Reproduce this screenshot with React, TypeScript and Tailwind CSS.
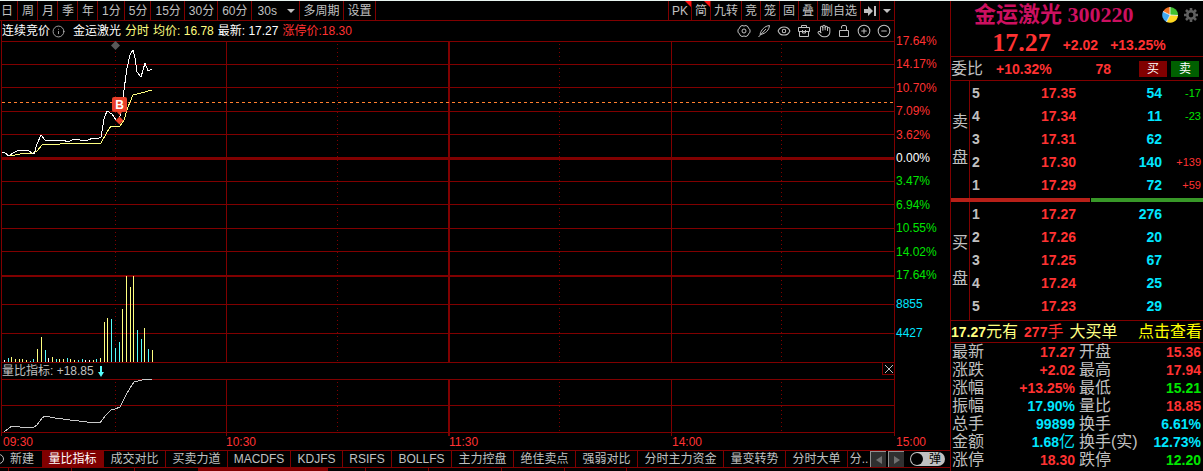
import { useState } from 'react';
import type { ReactNode } from 'react';
import { CircleMinus, CirclePlus, Eye, Hand, Info } from 'lucide-react';

const RED = 'text-[#ff3232]';
const GREEN = 'text-[#00e600]';
const CYAN = 'text-[#00e6ff]';

const periods = ['周', '月', '季', '年', '1分', '5分', '15分', '30分', '60分'];

const tools = [
  { label: 'PK', hot: true },
  { label: '简', hot: true },
  { label: '九转' },
  { label: '竞' },
  { label: '笼' },
  { label: '固' },
  { label: '叠' },
  { label: '删自选' },
];

const percents = [
  { text: '17.64%', color: RED },
  { text: '14.17%', color: RED },
  { text: '10.70%', color: RED },
  { text: '7.09%', color: RED },
  { text: '3.62%', color: RED },
  { text: '0.00%', color: 'text-white' },
  { text: '3.47%', color: GREEN },
  { text: '6.94%', color: GREEN },
  { text: '10.55%', color: GREEN },
  { text: '14.02%', color: GREEN },
  { text: '17.64%', color: GREEN },
];

const indicators = [
  { label: '量比指标', width: 'w-[62px]' },
  { label: '成交对比', width: 'w-[62px]' },
  { label: '买卖力道', width: 'w-[62px]' },
  { label: 'MACDFS', width: 'w-[63px]' },
  { label: 'KDJFS', width: 'w-[52px]' },
  { label: 'RSIFS', width: 'w-[49px]' },
  { label: 'BOLLFS', width: 'w-[60px]' },
  { label: '主力控盘', width: 'w-[62px]' },
  { label: '绝佳卖点', width: 'w-[62px]' },
  { label: '强弱对比', width: 'w-[62px]' },
  { label: '分时主力资金', width: 'w-[86px]' },
  { label: '量变转势', width: 'w-[62px]' },
  { label: '分时大单', width: 'w-[62px]' },
];

const asks = [
  { level: 5, price: '17.35', qty: '54', change: '-17' },
  { level: 4, price: '17.34', qty: '11', change: '-23' },
  { level: 3, price: '17.31', qty: '62', change: '' },
  { level: 2, price: '17.30', qty: '140', change: '+139' },
  { level: 1, price: '17.29', qty: '72', change: '+59' },
];

const bids = [
  { level: 1, price: '17.27', qty: '276', change: '' },
  { level: 2, price: '17.26', qty: '20', change: '' },
  { level: 3, price: '17.25', qty: '67', change: '' },
  { level: 4, price: '17.24', qty: '25', change: '' },
  { level: 5, price: '17.23', qty: '29', change: '' },
];

const stats = [
  { left: '最新', value: '17.27', color: RED, right: '开盘', value2: '15.36', color2: RED },
  { left: '涨跌', value: '+2.02', color: RED, right: '最高', value2: '17.94', color2: RED },
  { left: '涨幅', value: '+13.25%', color: RED, right: '最低', value2: '15.21', color2: GREEN },
  { left: '振幅', value: '17.90%', color: CYAN, right: '量比', value2: '18.85', color2: RED },
  { left: '总手', value: '99899', color: CYAN, right: '换手', value2: '6.61%', color2: CYAN },
  { left: '金额', value: '1.68', unit: '亿', color: CYAN, right: '换手(实)', value2: '12.73%', color2: CYAN },
  { left: '涨停', value: '18.30', color: RED, right: '跌停', value2: '12.20', color2: GREEN },
];

const Y = '#ffff80';
const C = '#54fcfc';
const W = '#ffffff';

// x, height, color
const volume: [number, number, string][] = [
  [4, 2, W], [8, 4, C], [11, 5, Y], [15, 3, Y], [19, 3, Y], [22, 3, Y], [26, 2, Y],
  [30, 1, C], [33, 3, C], [37, 13, Y], [41, 25, Y], [45, 12, C], [48, 4, W], [52, 5, Y],
  [56, 3, C], [59, 3, Y], [63, 3, Y], [67, 4, C], [70, 3, Y], [74, 2, Y], [78, 2, C],
  [82, 3, C], [85, 2, W], [89, 2, W], [93, 2, Y], [96, 3, C], [100, 4, Y], [104, 40, Y],
  [107, 44, Y], [111, 43, C], [115, 14, C], [119, 20, C], [122, 53, Y], [126, 86, Y],
  [130, 75, Y], [133, 86, Y], [137, 32, C], [141, 23, C], [144, 34, Y], [148, 13, C],
  [152, 12, Y],
];

const priceLine =
  '2,111 5,112 9,115 13,112 17,110 22,109 28,109 32,112 34,113 37,103 41,94 45,99 63,99 68,101 74,98 80,99 88,99 93,97 97,98 101,96 104,78 107,70 112,73 116,79 119,80 122,66 124,49 127,27 130,14 133,9 135,17 137,31 141,36 145,22 148,30 152,28';
const averageLine =
  '2,111 5,112 10,115 20,113 33,112 37,110 43,103 60,103 63,102 101,102 107,91 111,85 120,85 124,79 128,66 133,54 141,52 152,49';
const ratioLine =
  '4,53 12,47 20,48 33,49 37,46 42,39 45,37 55,39 70,41 87,43 100,44 105,37 111,31 115,30 120,28 125,18 130,9 134,3 142,1 152,0';

function Verticals({ height, dots }: { height: number; dots: number }) {
  return (
    <>
      <g fill="#800000">
        <rect x="1" width="1" height={height} />
        <rect x="226" width="1" height={height} />
        <rect x="448" width="2" height={height} />
        <rect x="671" width="1" height={height} />
        <rect x="894" width="1" height={height} />
      </g>
      <g stroke="#800000" strokeDasharray="1 3">
        {[115.5, 337.5, 559.5, 781.5].map((x) => (
          <line key={x} x1={x} x2={x} y1="3" y2={dots} />
        ))}
      </g>
    </>
  );
}

function PriceChart() {
  return (
    <svg
      viewBox="0 0 895 322"
      preserveAspectRatio="none"
      className="block h-[322px] w-full"
      shapeRendering="crispEdges"
      role="img"
      aria-label="分时走势"
    >
      <Verticals height={322} dots={320} />
      <g fill="#800000">
        {[0, 23, 46, 70, 93, 140, 163, 187, 210, 263, 292, 321].map((y) => (
          <rect key={y} x="1" y={y} width="894" height="1" />
        ))}
        <rect x="1" y="116" width="894" height="3" />
        <rect x="1" y="234" width="894" height="2" />
      </g>
      <line x1="2" x2="894" y1="61.5" y2="61.5" stroke="#ff8030" strokeDasharray="3 3" />
      {volume.map(([x, h, color]) => (
        <rect key={x} x={x} y={321 - h} width="1" height={h} fill={color} />
      ))}
      <polyline points={averageLine} fill="none" stroke={Y} />
      <polyline points={priceLine} fill="none" stroke={W} />
      <g shapeRendering="geometricPrecision">
        <path d="M115.5 0l4.5 4.5-4.5 4.5-4.5-4.5z" fill="#585858" />
        <rect x="112" y="56" width="15" height="15" rx="2" fill="#e8402a" />
        <path d="M117 71h5l-2.500 3z" fill="#e8402a" />
        <path d="M119.500 75.500l4 4-4 4-4-4z" fill="#e8402a" />
        <text
          x="119.500"
          y="68"
          textAnchor="middle"
          fill="#fff"
          className="font-['Liberation_Sans',sans-serif] text-[12px] font-bold"
        >
          B
        </text>
      </g>
    </svg>
  );
}

function RatioChart() {
  return (
    <svg
      viewBox="0 0 895 57"
      preserveAspectRatio="none"
      className="block h-[57px] w-full"
      shapeRendering="crispEdges"
      role="img"
      aria-label="量比指标"
    >
      <Verticals height={57} dots={52} />
      <g fill="#800000">
        <rect x="1" y="0" width="894" height="1" />
        <rect x="1" y="26" width="894" height="1" />
        <rect x="1" y="53" width="894" height="1" />
      </g>
      <polyline points={ratioLine} fill="none" stroke="#c8c8c8" />
    </svg>
  );
}

function NutIcon() {
  return (
    <svg viewBox="0 0 14 14" className="size-3.5" fill="none" stroke="currentColor">
      <path d="M5 1.500q2 1 4 0l2 1.200q0 2 2 2.800v3q-2 .8-2 2.800l-2 1.200q-2-1-4 0l-2-1.200q0-2-2-2.800v-3q2-.8 2-2.800z" />
      <circle cx="7" cy="7" r="2" />
    </svg>
  );
}

function QuillIcon() {
  return (
    <svg viewBox="0 0 14 14" className="size-3.5" fill="none" stroke="currentColor">
      <path d="M1.500 13L9 5M3 10.500C4 6 7.500 2 12.500 1.500 12 6 9 9.500 3.500 10.500z" />
    </svg>
  );
}

function ToolboxIcon() {
  return (
    <svg viewBox="0 0 14 14" className="size-3.5" fill="none" stroke="currentColor">
      <path d="M1.500 3.500h11v4h-11zM2.500 7.500v5h9v-5M4.500 3.500v-2h5v2M5.500 6v3h3V6" />
    </svg>
  );
}

function LockIcon() {
  return (
    <svg viewBox="0 0 14 14" className="size-3.5" fill="none" stroke="currentColor">
      <path d="M2.500 6.500h9v6h-9zM4.500 4.500V3q0-1.500 1.500-1.500h2q1.500 0 1.500 1.500v3.500" />
    </svg>
  );
}

function PieIcon() {
  return (
    <svg viewBox="0 0 16 16" className="size-4">
      <path d="M8 8L1 5A8 8 0 0 1 8 0z" fill="#f07020" />
      <path d="M8 8V0a8 8 0 0 1 8 8.500z" fill="#40c030" />
      <path d="M8 8l8 .5A8 8 0 0 1 4.500 15z" fill="#ffd820" />
      <path d="M8 8l-3.500 7A8 8 0 0 1 1 4.500z" fill="#40a8f0" />
      <path d="M8 0v8l8 .5M8 8l-3.500 7M8 8L1 4.500" stroke="#fff" strokeWidth=".8" fill="none" />
    </svg>
  );
}

function GearIcon() {
  return (
    <svg viewBox="0 0 14 14" className="size-3.5" fill="none" stroke="#606060">
      <circle cx="7" cy="7" r="3.700" strokeWidth="2.600" />
      <path
        d="M7 0v2.500M7 11.500V14M0 7h2.500M11.500 7H14M2 2l1.800 1.800M10.200 10.200L12 12M12 2l-1.800 1.800M3.800 10.200L2 12"
        strokeWidth="2.600"
      />
    </svg>
  );
}

function Cell({ children, hot, pad = 'pl-1 pr-[3px]' }: { children: ReactNode; hot?: boolean; pad?: string }) {
  return (
    <button className={`relative h-full shrink-0 border-r border-[#800000] hover:text-white ${pad}`}>
      {children}
      {hot && (
        <svg viewBox="0 0 6 6" className="absolute top-0 right-0 size-1.5">
          <path d="M0 0h6v6z" fill="#ff1010" />
        </svg>
      )}
    </button>
  );
}

function Toolbar() {
  return (
    <nav className="flex h-5 items-center justify-between border-b border-[#800000]">
      <div className="flex h-full">
        <Cell pad="pl-px pr-1">日</Cell>
        {periods.map((p) => (
          <Cell key={p}>{p}</Cell>
        ))}
        <label className="relative flex h-full w-12 items-center border-r border-[#800000]">
          <select aria-label="周期" className="w-full appearance-none bg-black pl-1.5 outline-none">
            <option>30s</option>
          </select>
          <svg viewBox="0 0 8 4" className="pointer-events-none absolute right-1 h-1 w-2">
            <path d="M0 0h8l-4 4z" fill="#c0c0c0" />
          </svg>
        </label>
        <Cell>多周期</Cell>
        <Cell>设置</Cell>
      </div>
      <div className="flex h-full border-l border-[#800000]">
        {tools.map((t) => (
          <Cell key={t.label} hot={t.hot} pad="px-[3px]">
            {t.label}
          </Cell>
        ))}
        <button aria-label="右移" className="border-r border-[#800000] px-[3px]">
          <svg viewBox="0 0 12 12" className="size-3" fill="#c0c0c0">
            <path d="M0 4h4V1l5 5-5 5V8H0zM10 1h2v10h-2z" />
          </svg>
        </button>
        <button aria-label="更多" className="border-r border-[#800000] px-[3px]">
          <svg viewBox="0 0 8 4" className="h-1 w-2">
            <path d="M0 0h8l-4 4z" fill="#c0c0c0" />
          </svg>
        </button>
      </div>
    </nav>
  );
}

function ChartHeader() {
  return (
    <div className="ml-px flex h-5 items-center justify-between border-x border-[#800000] pr-[3px]">
      <div className="flex items-center">
        <span className="text-white">连续竞价</span>
        <Info className="mr-2 ml-0.5 size-[13px]" strokeWidth={1.5} />
        <span className="mr-1 text-white">金运激光</span>
        <span className="mr-1 text-[#ffff80]">分时</span>
        <span className="mr-1 text-[#ffff80]">均价: 16.78</span>
        <span className="mr-1 text-white">最新: 17.27</span>
        <span className={RED}>涨停价:18.30</span>
      </div>
      <div className="flex items-center gap-1.5">
        <button aria-label="设置"><NutIcon /></button>
        <button aria-label="画笔"><QuillIcon /></button>
        <button aria-label="显示"><Eye className="size-3.5" strokeWidth={1.75} /></button>
        <button aria-label="工具箱"><ToolboxIcon /></button>
        <button aria-label="拖动"><Hand className="size-3.5" strokeWidth={1.75} /></button>
        <button aria-label="锁定"><LockIcon /></button>
        <button aria-label="放大"><CirclePlus className="size-3.5" strokeWidth={1.75} /></button>
        <button aria-label="缩小"><CircleMinus className="size-3.5" strokeWidth={1.75} /></button>
      </div>
    </div>
  );
}

function IndicatorTabs() {
  const [active, setActive] = useState('量比指标');

  return (
    <div className="flex h-[18px] items-stretch overflow-hidden border-y border-[#800000]">
      <button className="flex w-[42px] shrink-0 items-center justify-end gap-1.5 overflow-hidden pr-2">
        <span className="size-2.5 shrink-0 rounded-full border border-[#c0c0c0]" />
        <span className="shrink-0">新建</span>
      </button>
      {indicators.map((t) => (
        <button
          key={t.label}
          onClick={() => setActive(t.label)}
          className={`flex shrink-0 items-center justify-center border-r border-[#800000] ${t.width} ${
            t.label === active ? 'bg-[#800000] text-white' : ''
          }`}
        >
          {t.label}
        </button>
      ))}
      <button className="flex w-[22px] shrink-0 items-center justify-center">分..</button>
      <div className="flex gap-0.5">
        <button aria-label="向左" className="w-4 border-t border-l border-[#909090] bg-[#303030] text-[#707070]">
          <svg viewBox="0 0 6 8" className="mx-auto h-2 w-1.5">
            <path d="M6 0v8L0 4z" fill="currentColor" />
          </svg>
        </button>
        <button aria-label="向右" className="w-4 border-t border-l border-[#909090] bg-[#303030] text-[#707070]">
          <svg viewBox="0 0 6 8" className="mx-auto h-2 w-1.5">
            <path d="M0 0v8l6-4z" fill="currentColor" />
          </svg>
        </button>
      </div>
      <button className="my-auto ml-1.5 flex h-3.5 w-[35px] items-center justify-between rounded-full bg-[#c0c0c0] px-px pr-1 text-black">
        <span className="size-3 rounded-full bg-black" />
        弹
      </button>
    </div>
  );
}

function BookSide({ title, rows, height }: { title: string; rows: typeof asks; height: string }) {
  return (
    <div className={`flex items-start ${height}`}>
      <div className="flex w-[19px] flex-col items-center justify-center gap-5 self-stretch border-r border-[#800000] text-[16px] leading-4">
        <span>{title}</span>
        <span>盘</span>
      </div>
      <table className="flex-1 table-fixed text-right font-bold">
        <tbody>
          {rows.map((r) => (
            <tr key={r.level} className="h-[23px]">
              <th scope="row" className="w-[16px] pl-0.5 text-left">{r.level}</th>
              <td className={`w-[90px] ${RED}`}>{r.price}</td>
              <td className={`w-[86px] ${CYAN}`}>{r.qty}</td>
              <td
                className={`pr-0.5 text-[11px] font-normal ${r.change.startsWith('-') ? GREEN : RED}`}
              >
                {r.change}
              </td>
            </tr>
          ))}
        </tbody>
      </table>
    </div>
  );
}

function QuotePanel() {
  return (
    <aside className="w-[253px] shrink-0 border-l border-[#800000] text-[14px] leading-4">
      <div className="h-14 border-b border-[#800000] font-['Liberation_Serif','Noto_Sans_CJK_SC',serif]">
        <div className="flex h-7 items-center pr-[5px] pl-[23px]">
          <h1 className="flex-1 text-[22px] leading-7 font-bold text-[#cc1060]">金运激光 300220</h1>
          <button aria-label="板块" className="mr-1.5"><PieIcon /></button>
          <button aria-label="设置"><GearIcon /></button>
        </div>
        <div className={`flex h-7 items-center justify-center gap-3 pl-1 font-bold ${RED}`}>
          <span className="text-[26px] leading-7">17.27</span>
          <span className="pt-1 font-['Liberation_Sans',sans-serif]">+2.02</span>
          <span className="pt-1 font-['Liberation_Sans',sans-serif]">+13.25%</span>
        </div>
      </div>

      <div className="flex h-6 items-center border-b border-[#800000] pr-1 font-bold">
        <span className="w-[45px] text-[16px] font-normal">委比</span>
        <span className={`flex-1 ${RED}`}>+10.32%</span>
        <span className={`mr-7 ${RED}`}>78</span>
        <button className="mr-1 h-4 w-7 bg-[#800000] text-[12px] font-normal text-white">买</button>
        <button className="h-4 w-7 bg-[#006000] text-[12px] font-normal text-white">卖</button>
      </div>

      <BookSide title="卖" rows={asks} height="min-h-[117px]" />
      <div className="flex h-1 gap-px">
        <div className="w-[55%] bg-[#b82018]" />
        <div className="flex-1 bg-[#389828]" />
      </div>
      <BookSide title="买" rows={bids} height="min-h-[118px]" />

      <div className="flex h-[23px] items-center border-y border-[#800000] pr-px text-[16px] text-[#ffff80]">
        <b className="text-[14px]">17.27</b>
        <span className="mr-1.5">元有</span>
        <span className={`mr-1.5 ${RED}`}>
          <b className="text-[14px]">277</b>手
        </span>
        <span className="flex-1">大买单</span>
        <a href="#detail" className="text-[#ffff00]">点击查看</a>
      </div>

      <table className="w-full table-fixed">
        <tbody>
          {stats.map((s) => (
            <tr key={s.left} className="h-[18px]">
              <th scope="row" className="w-9 pl-px text-left text-[16px] font-normal">{s.left}</th>
              <td className={`w-[88px] text-right font-bold ${s.color}`}>
                {s.value}
                {s.unit && <span className="text-[16px] font-normal">{s.unit}</span>}
              </td>
              <th scope="row" className="w-[62px] pl-1 text-left text-[16px] font-normal whitespace-nowrap">
                {s.right}
              </th>
              <td className={`pr-0.5 text-right font-bold ${s.color2}`}>{s.value2}</td>
            </tr>
          ))}
        </tbody>
      </table>
    </aside>
  );
}

export default function App() {
  return (
    <div className="flex min-h-screen border-t border-[#e8f4f0] bg-black font-['Liberation_Sans','Noto_Sans_CJK_SC',sans-serif] text-[12px] leading-4 text-[#c0c0c0]">
      <main className="flex min-w-0 flex-1 flex-col">
        <div className="flex">
          <div className="min-w-0 flex-1">
            <Toolbar />
            <ChartHeader />
            <PriceChart />
            <div className="ml-px flex h-4 items-center justify-between border-x border-[#800000]">
              <div className="flex items-center gap-1">
                <span>量比指标: +18.85</span>
                <svg viewBox="0 0 6 11" className="h-[11px] w-1.5" fill="#54fcfc">
                  <path d="M2 0h2v6h2L3 11 0 6h2z" />
                </svg>
              </div>
              <button
                aria-label="关闭"
                className="flex size-3 items-center justify-center self-start border-b border-l border-[#800000]"
              >
                <svg viewBox="0 0 8 8" className="size-2" stroke="#c0c0c0">
                  <path d="M0 0l8 8M8 0L0 8" />
                </svg>
              </button>
            </div>
            <RatioChart />
            <div className={`grid h-3.5 grid-cols-4 pl-[3px] leading-3 ${RED}`}>
              <span>09:30</span>
              <span>10:30</span>
              <span>11:30</span>
              <span>14:00</span>
            </div>
          </div>
          <div className="flex w-[55px] shrink-0 flex-col pt-8 pl-px">
            <div className="flex h-[250px] flex-col justify-between">
              {percents.map((p, i) => (
                <span key={i} className={p.color}>{p.text}</span>
              ))}
            </div>
            <span className={`mt-[13px] ${CYAN}`}>8855</span>
            <span className={`mt-[13px] ${CYAN}`}>4427</span>
            <span className={`mt-auto h-3.5 leading-3 ${RED}`}>15:00</span>
          </div>
        </div>
        <IndicatorTabs />
        <div className="flex h-[3px] divide-x divide-[#800000]">
          <div className="w-[9px]" />
          <div className="w-[63px]" />
          <div className="w-[63px]" />
          <div className="w-[64px]" />
          <div className="w-[129px] bg-[#800000]" />
          <div className="w-[38px]" />
          <div className="w-[63px]" />
          <div className="w-[73px]" />
          <div className="w-[63px]" />
          <div className="w-[62px]" />
          <div className="flex-1" />
        </div>
      </main>
      <QuotePanel />
    </div>
  );
}
